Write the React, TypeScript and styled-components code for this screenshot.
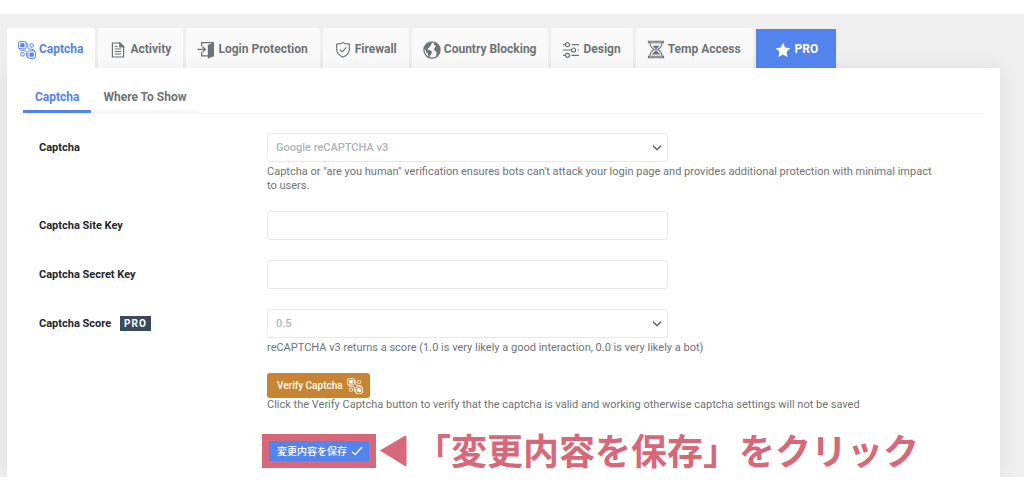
import React from "react";
import styled, { createGlobalStyle, css } from "styled-components";

const BLUE = "#5383ec";
const GREY = "#6e7377";
const PINK = "#d66879";

const GlobalStyle = createGlobalStyle`
  *, *::before, *::after { box-sizing: border-box; }
  body {
    margin: 0;
    background: #fff;
    color: ${GREY};
    font-family: Roboto, "Noto Sans CJK JP", sans-serif;
    font-size: 12px;
    line-height: 15px;
  }
  button, input, select { font: inherit; color: inherit; }
`;

const Page = styled.div`
  padding: 14px 0 3px;
`;

const Canvas = styled.main`
  overflow: hidden;
  padding: 14px 24px 0 7px;
  background: #efefef;
`;

const TabBar = styled.nav`
  display: flex;
  align-items: flex-end;
  gap: 3px;
  position: relative;
`;

const Tab = styled.a<{ $active?: boolean; $pro?: boolean }>`
  display: flex;
  align-items: center;
  gap: 3px;
  height: 40px;
  padding: 3px 12px 0 11px;
  border-radius: 3px 3px 0 0;
  background: linear-gradient(#f9f9f9 70%, #f4f4f4);
  color: ${GREY};
  font-size: 12px;
  font-weight: 700;
  white-space: nowrap;
  text-decoration: none;
  > svg { flex: none; width: 18px; }
  ${(p) => p.$active && css`
    background: #fff;
    color: ${BLUE};
  `}
  ${(p) => p.$pro && css`
    height: 39px;
    padding: 2px 18px 0;
    border-radius: 0;
    background: ${BLUE};
    color: #fff;
  `}
`;

const Panel = styled.section`
  padding: 14px 16px 9px;
  background: #fff;
  box-shadow: 0 0 20px rgba(0, 0, 0, 0.08);
`;

const SubTabs = styled.nav`
  display: flex;
  border-bottom: 1px solid #f6f6f6;
`;

const SubTab = styled.a<{ $active?: boolean }>`
  padding: 8px 12px 5px;
  border-bottom: 3px solid ${(p) => (p.$active ? BLUE : "#f8f8f8")};
  color: ${(p) => (p.$active ? BLUE : GREY)};
  font-weight: 700;
  text-decoration: none;
`;

const Form = styled.form`
  display: flex;
  flex-direction: column;
  gap: 18px;
  padding: 19px 44px 0 16px;
`;

const Row = styled.div`
  display: grid;
  grid-template-columns: 228px minmax(0, 1fr);
  align-items: start;
  min-height: 31px;
`;

const Label = styled.label`
  display: flex;
  align-items: center;
  gap: 9px;
  height: 29px;
  color: #22272b;
  font-size: 11px;
  font-weight: 700;
`;

const Field = styled.div`
  grid-column: 2;
`;

const TextInput = styled.input`
  display: block;
  width: 100%;
  max-width: 401px;
  height: 29px;
  padding: 0 8px;
  border: 1px solid #e8e9eb;
  border-radius: 3px;
  background: #fff;
`;

const SelectBox = styled.div`
  display: grid;
  align-items: center;
  max-width: 401px;
  > * { grid-area: 1 / 1; }
  > svg { justify-self: end; margin-right: 6px; pointer-events: none; }
`;

const Select = styled.select`
  width: 100%;
  height: 29px;
  padding: 0 8px;
  border: 1px solid #e8e9eb;
  border-radius: 3px;
  background: #fff;
  color: #acb2b9;
  font-size: 11px;
  font-weight: 500;
  appearance: none;
`;

const Help = styled.p`
  margin: 3px 0 0;
  font-size: 11px;
  line-height: 14px;
`;

const Badge = styled.span`
  padding: 0 4px;
  background: #3b495c;
  color: #fff;
  font-size: 10px;
  line-height: 15px;
  letter-spacing: 1px;
`;

const VerifyButton = styled.button`
  display: flex;
  align-items: center;
  gap: 4px;
  height: 25px;
  padding: 0 7px 0 10px;
  border: 0;
  border-radius: 3px;
  background: #c88433;
  color: #fff;
  font-size: 10px;
  font-weight: 500;
  + p { margin-top: 0; }
`;

const SaveRow = styled.div`
  display: flex;
  align-items: center;
  height: 34px;
  margin-top: 4px;
  padding-left: 2px;
`;

const SaveButton = styled.button`
  display: flex;
  align-items: center;
  justify-content: space-between;
  width: 100px;
  height: 20px;
  padding: 0 6px 0 8px;
  border: 0;
  background: ${BLUE};
  box-shadow: 0 0 0 7px ${PINK};
  color: #fff;
  font-size: 10px;
  font-weight: 500;
  white-space: nowrap;
`;

const Callout = styled.strong`
  display: flex;
  align-items: center;
  gap: 8px;
  margin-left: 10px;
  color: ${PINK};
  font-family: "Noto Sans CJK JP", sans-serif;
  font-size: 36px;
  font-weight: 700;
  line-height: 34px;
  white-space: nowrap;
`;

const CalloutText = styled.span`
  padding-bottom: 4px;
`;

const CaptchaIcon = ({ size = 18 }: { size?: number }) => (
  <svg width={size} height={size} viewBox="0 0 18 18" fill="none" stroke="currentColor" strokeWidth="1" aria-hidden="true">
    <rect x=".6" y=".6" width="7.6" height="7.2" rx="1.6" />
    <rect x="2.3" y="2.200" width="4.200" height="4" fill="currentColor" stroke="none" />
    <rect x="9.900" y="9.900" width="7.500" height="7.500" rx="1.600" />
    <rect x="11.600" y="11.600" width="4.200" height="4.100" fill="currentColor" stroke="none" />
    <rect x="12" y="2.800" width="3.400" height="3.400" rx="1" />
    <rect x="2.800" y="11.600" width="3.400" height="3.400" rx="1" />
    <path d="M1 7.200C1.600 9 2.800 9.400 4.500 9.400H6.400Q8.300 9.400 8.300 11.400V13.400Q8.300 15.600 10.200 16.800M8 1.400Q9.800 2.400 9.800 4.600V6.200Q9.800 8.200 11.600 8.200H13.500Q16 8.200 16.900 10.400" />
  </svg>
);

const FileIcon = () => (
  <svg width="16" height="18" viewBox="0 0 16 18" fill="none" stroke="currentColor" strokeWidth="1.200" aria-hidden="true">
    <path d="M2.400 2H10L13.600 5.600V16H2.400ZM4.800 8H11.200M4.800 10.500H11.200M4.800 13H11.200M4.800 5.500H7.500" />
    <path d="M9.800 2V5.800H13.600Z" fill="currentColor" />
  </svg>
);

const DoorIcon = () => (
  <svg width="18" height="18" viewBox="0 0 18 18" fill="none" stroke="currentColor" strokeWidth="1.300" aria-hidden="true">
    <path d="M4.700 5.500V1.600H16.200V14.800H11M4.700 11.200V14.800H11" />
    <path d="M10.800 4 16.900 1.200V14.900L10.800 17.800Z" fill="currentColor" stroke="none" />
    <path d="M.4 8.400H8M5.600 5.800 8.300 8.400 5.600 11" />
  </svg>
);

const ShieldIcon = () => (
  <svg width="16" height="18" viewBox="0 0 16 18" fill="none" stroke="currentColor" strokeWidth="1.200" strokeLinejoin="round" aria-hidden="true">
    <path d="M8 1.600C6.300 3 4.200 3.200 1.700 3.200V8.500C1.700 12.300 4.200 14.400 8 16.200C11.800 14.400 14.300 12.300 14.300 8.500V3.200C11.800 3.200 9.700 3 8 1.600Z" />
    <path d="M5 8.700 7.300 10.900 11.300 6.400" />
  </svg>
);

const GlobeIcon = () => (
  <svg width="18" height="18" viewBox="0 0 18 18" aria-hidden="true">
    <circle cx="9" cy="9" r="8.100" fill="none" stroke="currentColor" strokeWidth="1.200" />
    <path fill="currentColor" d="M1 7.500C1.600 4.300 4.300 1.300 8 1L9.200 2.200 7.800 3.200 8.400 4.200 6.800 5.200 6.200 6.800 4.600 7.600 5 9 7.200 9.300 9.200 11 8.200 13.200 7 14.400 6.600 16.600 5.300 15.800 5 12.800 3.300 11.200 2.700 9.200Z" />
    <path fill="currentColor" d="M11 1.300C14.600 2.100 17 5.300 17.100 8.500 17 12 15.400 14.700 13.400 15.600L13.200 13.600 13.700 11.500 12.600 10.200 11.400 9.400 11.200 7.200 12.200 5.800 13.400 5.400 12 4.200 10.900 4Z" />
  </svg>
);

const SlidersIcon = () => (
  <svg width="17" height="18" viewBox="0 0 17 18" fill="none" stroke="currentColor" strokeWidth="1.200" aria-hidden="true">
    <circle cx="5" cy="3.700" r="2" />
    <circle cx="11" cy="9" r="2" />
    <circle cx="5" cy="14.300" r="2" />
    <path d="M.6 3.700H3M9 3.700H16.400M.6 9H9M15 9H16.400M.6 14.300H3M9 14.300H16.400" />
  </svg>
);

const HourglassIcon = () => (
  <svg width="17" height="19" viewBox="0 0 17 19" fill="none" stroke="currentColor" strokeWidth="1.100" aria-hidden="true">
    <path d="M1 1.200H16V2.800H1ZM1 16.200H16V17.800H1Z" />
    <path d="M2.500 3C2.500 6.200 4 8 6.700 9.500C4 11 2.500 12.800 2.500 16M14.500 3C14.500 6.200 13 8 10.300 9.500C13 11 14.500 12.800 14.500 16" />
    <path d="M5 5.800H12L9 9V10.500L13 14.600H4L8 10.500V9Z" fill="currentColor" stroke="none" />
  </svg>
);

const StarIcon = () => (
  <svg width="16" height="16" viewBox="0 0 16 16" fill="currentColor" aria-hidden="true">
    <path d="M8 .8 10.200 5.500 15.300 6.200 11.600 9.700 12.500 14.900 8 12.400 3.500 14.900 4.400 9.700 .7 6.200 5.800 5.500Z" />
  </svg>
);

const Chevron = () => (
  <svg width="10" height="6" viewBox="0 0 10 6" fill="none" stroke="#5f6367" strokeWidth="1.600" aria-hidden="true">
    <path d="M1 .8 5 4.700 9 .8" />
  </svg>
);

const CheckIcon = () => (
  <svg width="12" height="10" viewBox="0 0 12 10" fill="none" stroke="currentColor" strokeWidth="1.300" aria-hidden="true">
    <path d="M1 5.600 4.200 8.600 11 1" />
  </svg>
);

const Arrow = () => (
  <svg width="28" height="32" viewBox="0 0 28 32" fill="currentColor" aria-hidden="true">
    <path d="M.8 15.500 26 .8Q27.500 .5 27.500 2V30Q27.500 31.500 26 31Z" />
  </svg>
);

const tabs = [
  { label: "Captcha", icon: <CaptchaIcon />, active: true },
  { label: "Activity", icon: <FileIcon /> },
  { label: "Login Protection", icon: <DoorIcon /> },
  { label: "Firewall", icon: <ShieldIcon /> },
  { label: "Country Blocking", icon: <GlobeIcon /> },
  { label: "Design", icon: <SlidersIcon /> },
  { label: "Temp Access", icon: <HourglassIcon /> },
  { label: "PRO", icon: <StarIcon />, pro: true },
];

export default function App() {
  return (
    <Page>
      <GlobalStyle />
      <Canvas>
        <TabBar>
          {tabs.map((t) => (
            <Tab key={t.label} href="#" $active={t.active} $pro={t.pro}>
              {t.icon}
              {t.label}
            </Tab>
          ))}
        </TabBar>
        <Panel>
          <SubTabs>
            <SubTab href="#" $active>Captcha</SubTab>
            <SubTab href="#">Where To Show</SubTab>
          </SubTabs>
          <Form onSubmit={(e) => e.preventDefault()}>
            <Row>
              <Label htmlFor="captcha">Captcha</Label>
              <Field>
                <SelectBox>
                  <Select id="captcha"><option>Google reCAPTCHA v3</option></Select>
                  <Chevron />
                </SelectBox>
                <Help>
                  Captcha or "are you human" verification ensures bots can't attack your login page and provides
                  additional protection with minimal impact to users.
                </Help>
              </Field>
            </Row>
            <Row>
              <Label htmlFor="site-key">Captcha Site Key</Label>
              <TextInput id="site-key" type="text" />
            </Row>
            <Row>
              <Label htmlFor="secret-key">Captcha Secret Key</Label>
              <TextInput id="secret-key" type="text" />
            </Row>
            <Row>
              <Label htmlFor="score">Captcha Score <Badge>PRO</Badge></Label>
              <Field>
                <SelectBox>
                  <Select id="score"><option>0.5</option></Select>
                  <Chevron />
                </SelectBox>
                <Help>reCAPTCHA v3 returns a score (1.0 is very likely a good interaction, 0.0 is very likely a bot)</Help>
              </Field>
            </Row>
            <Row>
              <Field>
                <VerifyButton type="button">Verify Captcha <CaptchaIcon size={16} /></VerifyButton>
                <Help>
                  Click the Verify Captcha button to verify that the captcha is valid and working otherwise captcha
                  settings will not be saved
                </Help>
              </Field>
            </Row>
            <Row>
              <Field>
                <SaveRow>
                  <SaveButton type="submit">変更内容を保存 <CheckIcon /></SaveButton>
                  <Callout><Arrow /><CalloutText>「変更内容を保存」をクリック</CalloutText></Callout>
                </SaveRow>
              </Field>
            </Row>
          </Form>
        </Panel>
      </Canvas>
    </Page>
  );
}
